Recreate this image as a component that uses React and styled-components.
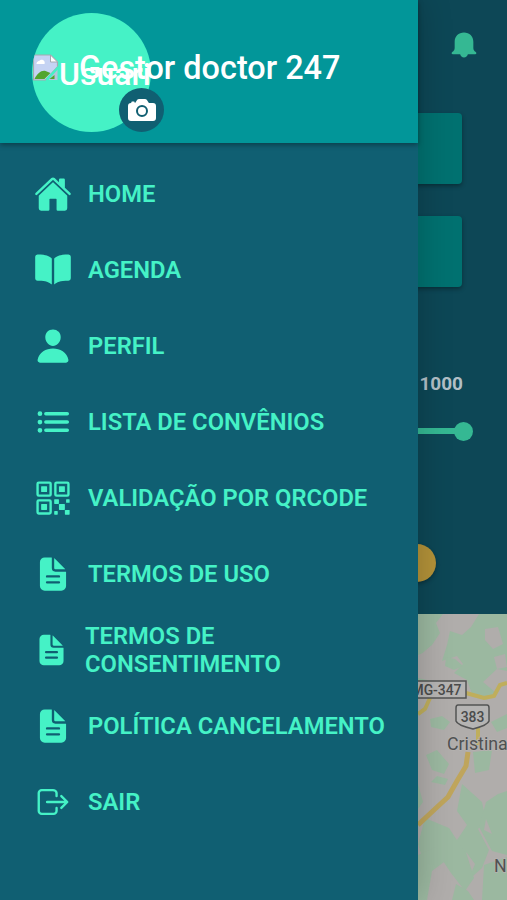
import React from 'react';
import styled, { createGlobalStyle } from 'styled-components';
import {
  IoHome,
  IoBook,
  IoPerson,
  IoList,
  IoQrCodeOutline,
  IoDocumentText,
  IoLogOutOutline,
  IoCamera
} from 'react-icons/io5';

const GlobalStyle = createGlobalStyle`
  * {
    box-sizing: border-box;
  }

  body {
    margin: 0;
    font-family: Roboto, 'Liberation Sans', sans-serif;
    overflow: hidden;
  }
`;

const Screen = styled.div`
  position: relative;
  width: 507px;
  height: 900px;
  overflow: hidden;
  background-color: #0d4756;
`;

const Page = styled.main`
  display: flex;
  flex-direction: column;
  height: 100%;
`;

const TopBar = styled.header`
  display: flex;
  justify-content: flex-end;
  align-items: center;
  height: 90px;
  padding-right: 30px;
  color: #35b893;
`;

const Filters = styled.section`
  display: flex;
  flex-direction: column;
  gap: 32px;
  height: 277px;
  padding: 23px 45px 0;
`;

const FilterCard = styled.div`
  height: 71px;
  border-radius: 4px;
  background-color: #007170;
  box-shadow: 0 2px 4px rgba(0, 0, 0, 0.35);
`;

const Range = styled.section`
  display: flex;
  flex-direction: column;
  align-items: flex-end;
  gap: 32px;
  height: 177px;
  padding: 5px 35px 0;
`;

const RangeValue = styled.span`
  margin-right: 9px;
  color: #b2bfc6;
  font-size: 19px;
  font-weight: 700;
  line-height: 24px;
`;

const Track = styled.div`
  display: flex;
  justify-content: flex-end;
  align-items: center;
  width: 100%;
  height: 6px;
  background-color: #35b893;
`;

const Knob = styled.div`
  width: 19px;
  height: 19px;
  margin-right: -1px;
  border-radius: 50%;
  background-color: #35b893;
`;

const Actions = styled.section`
  height: 70px;
  padding: 0 71px;
`;

const SearchButton = styled.button`
  display: block;
  width: 100%;
  height: 38px;
  border: none;
  border-radius: 19px;
  background-color: #b39239;
  box-shadow: 0 2px 4px rgba(0, 0, 0, 0.3);
`;

const MapView = styled.svg`
  display: block;
  align-self: flex-end;
  width: 89px;
  height: 286px;
`;

const Drawer = styled.aside`
  position: absolute;
  top: 0;
  left: 0;
  width: 418px;
  height: 100%;
  background-color: #105f72;
  box-shadow: 0 0 32px rgba(0, 0, 0, 0.22);
`;

const Profile = styled.header`
  display: flex;
  align-items: flex-start;
  height: 143px;
  padding: 13px 32px;
  background-color: #029699;
  box-shadow: 0 2px 5px rgba(0, 0, 0, 0.35);
`;

const AvatarBox = styled.div`
  position: relative;
  flex: none;
  width: 119px;
  height: 119px;
`;

const Avatar = styled.div`
  display: flex;
  align-items: center;
  width: 119px;
  height: 119px;
  padding-top: 2px;
  overflow: hidden;
  border-radius: 50%;
  background-color: #45f2c6;
  color: #fff;
  font-size: 32px;
  font-weight: 500;
  line-height: 40px;

  svg {
    flex: none;
    margin-bottom: 13px;
  }
`;

const CameraButton = styled.button`
  position: absolute;
  top: 75px;
  left: 87px;
  display: flex;
  align-items: center;
  justify-content: center;
  width: 45px;
  height: 44px;
  padding: 0;
  border: none;
  border-radius: 50%;
  background-color: #105f72;
  color: #fff;
  font-size: 32px;
`;

const UserName = styled.h1`
  z-index: 1;
  margin: 35px 0 0 -72px;
  color: #fff;
  font-size: 32.4px;
  font-weight: 500;
  line-height: 40px;
  white-space: nowrap;
`;

const Menu = styled.nav`
  display: flex;
  flex-direction: column;
  padding-top: 13px;
`;

const MenuItem = styled.a`
  display: flex;
  align-items: center;
  gap: 16px;
  height: 76px;
  padding: 0 24px 0 34px;
  color: #45f2c6;
  font-size: 23.75px;
  font-weight: 600;
  line-height: 28px;

  svg {
    flex: none;
    width: ${({ $wrap }) => ($wrap ? 35 : 38)}px;
    height: 38px;
  }
`;

const menuItems = [
  { label: 'HOME', icon: IoHome },
  { label: 'AGENDA', icon: IoBook },
  { label: 'PERFIL', icon: IoPerson },
  { label: 'LISTA DE CONVÊNIOS', icon: IoList },
  { label: 'VALIDAÇÃO POR QRCODE', icon: IoQrCodeOutline },
  { label: 'TERMOS DE USO', icon: IoDocumentText },
  { label: 'TERMOS DE CONSENTIMENTO', icon: IoDocumentText, wrap: true },
  { label: 'POLÍTICA CANCELAMENTO', icon: IoDocumentText },
  { label: 'SAIR', icon: IoLogOutOutline }
];

const BellIcon = () => (
  <svg width="26" height="26" viewBox="0 0 26 27" fill="currentColor">
    <path d="M13 .5c5.700 0 9.700 4 9.700 9.500v6.500c0 2 .8 3 2.500 4.300 1.200.9.7 2.200-.6 2.200H17c-.4 2-2 3.400-4 3.400S9.400 25 9 23H1.400C.1 23-.4 21.700.8 20.800c1.700-1.300 2.500-2.300 2.500-4.300V10C3.300 4.500 7.300.5 13 .5z" />
  </svg>
);

const BrokenImage = () => (
  <svg width="27" height="27" viewBox="0 0 26 27">
    <path d="M3 1h15l7 7v5L13 26H1V3q0-2 2-2z" fill="#c5d3f3" stroke="#a4a9b0" strokeWidth="1.2" />
    <path d="M18 1v7h7z" fill="#fff" stroke="#a4a9b0" />
    <path d="M4 10c0-3 3-3 4-4 3-1 5 2 4 4z" fill="#fff" />
    <path d="M2 25c3-6 7-9 11-8l5 2-6 6z" fill="#52a52d" />
    <path d="M25 14v12H16z" fill="#b6c4da" />
    <path d="M17 25l5-4v4z" fill="#52a52d" />
    <path d="M14 26L26 13" stroke="#45f2c6" strokeWidth="2.5" />
  </svg>
);

const RegionMap = () => (
  <MapView viewBox="0 0 89 286" fontFamily="Roboto, sans-serif">
    <rect width="89" height="286" fill="#b0adab" />
    <g fill="#9bb8a0">
      <path d="M0 0h25l-7 9 4 10-8 12-9 8-5 2z" />
      <path d="M61 0h28v57l-10-2-14 13 12 10-9 8-14-6-5-14-13-7 9-9-6-8-15 5 5-16 3-14 12 4 9-8z" />
      <path d="M28 43l9 2 8 7-9 4-9-4zM0 64l18 4 2 9-20 8zM12 105l12-3 8 6-6 8-13-3zM73 108l16-8v14l-10 4z" />
      <path d="M8 141l11-5 12 14-5 10-12-4zM19 162l11 3-3 6-14-3zM55 138l19-2-3 20-14 3z" />
      <path d="M0 170l5 18-5 7zM44 170l20 18 4 19-8 8 11 21-7 18-9 8-17-16-21-11 9-12 13 3 10-15-10-14z" />
      <path d="M89 177v64l-15-4-13-24 7-25 12-8z" />
      <path d="M7 204l24 10 17 26 8 24-9 13-14-18-10-15-16 9-7-23z" />
      <path d="M0 241l18-8 12 12-16 12-5 29H0zM66 251l23-8v43H64zM38 270l12 7 6 9H34z" />
    </g>
    <g fill="#b0adab">
      <path d="M67 15l13-2 5 17-10 5-8-9zM76 43l11-3 2 13-10 2zM68 205l6 15-8-4zM48 238l9 12-3 7z" />
      <path d="M0 43l13-11 12 7-9 17-16 2z" />
    </g>
    <path d="M0 100l7-5 5-11M48 79l18 5 10-2 6-11 7-2M60 114v17" fill="none" stroke="#bfae5c" strokeWidth="4" />
    <path d="M0 211l17-16 13-12 9-16 9-15 2-14" fill="none" stroke="#bfa55c" strokeWidth="5" />
    <rect x="-10" y="67" width="58" height="17" fill="#b5b4b3" stroke="#535454" strokeWidth="1.5" />
    <text x="-6.5" y="80.500" fontSize="13.9" fontWeight="500" fill="#4a4b4b">MG-347</text>
    <path d="M40 91h29q2 0 2 3v13q-1 4-16 8-16-4-17-8V94q0-3 2-3z" fill="#b5b4b3" stroke="#535454" strokeWidth="1.5" />
    <text x="54.5" y="107.500" fontSize="13.9" fontWeight="500" textAnchor="middle" fill="#4a4b4b">383</text>
    <g fontSize="17.8" fontWeight="400" fill="#505152" stroke="#b5b3b1" strokeWidth="1.5" paintOrder="stroke">
      <text x="29" y="136">Cristina</text>
      <text x="76" y="258">N</text>
    </g>
  </MapView>
);

const App = () => {
  return (
    <>
      <GlobalStyle />
      <Screen>
        <Page>
          <TopBar>
            <BellIcon />
          </TopBar>
          <Filters>
            <FilterCard />
            <FilterCard />
          </Filters>
          <Range>
            <RangeValue>1000</RangeValue>
            <Track>
              <Knob />
            </Track>
          </Range>
          <Actions>
            <SearchButton type="button" />
          </Actions>
          <RegionMap />
        </Page>

        <Drawer>
          <Profile>
            <AvatarBox>
              <Avatar>
                <BrokenImage />
                <span>Usuario</span>
              </Avatar>
              <CameraButton type="button">
                <IoCamera />
              </CameraButton>
            </AvatarBox>
            <UserName>Gestor doctor 247</UserName>
          </Profile>
          <Menu>
            {menuItems.map(({ label, icon: Icon, wrap }) => (
              <MenuItem key={label} $wrap={wrap}>
                <Icon />
                <span>{label}</span>
              </MenuItem>
            ))}
          </Menu>
        </Drawer>
      </Screen>
    </>
  );
};

export default App;
